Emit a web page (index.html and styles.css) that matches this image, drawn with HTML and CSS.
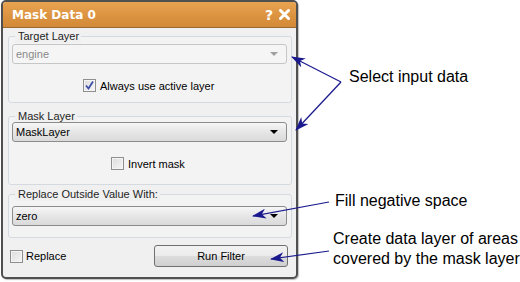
FILE: index.html
```html
<!DOCTYPE html>
<html>
<head>
<meta charset="utf-8">
<link rel="stylesheet" href="styles.css">
</head>
<body>
<div class="stage">
  <div class="window">
    <div class="titlebar">
      <span class="title">Mask Data 0</span>
      <span class="tools"><span class="help">?</span><svg class="close" width="11" height="11" viewBox="0 0 11 11"><path d="M1.5 1.5 L9.5 9.5 M9.5 1.5 L1.5 9.5" stroke="#fff" stroke-width="3" stroke-linecap="round"/></svg></span>
    </div>
    <div class="content">
      <div class="group g1">
        <div class="legend">Target Layer</div>
        <div class="combo disabled"><span>engine</span><i class="arrow"></i></div>
        <div class="checkrow c1">
          <span class="check checked"><svg width="11" height="11" viewBox="0 0 11 11"><path d="M2 5.5 L4.5 8.5 L9 1.5" fill="none" stroke="#3b4fa8" stroke-width="1.8"/></svg></span>
          <span>Always use active layer</span>
        </div>
      </div>
      <div class="group g2">
        <div class="legend">Mask Layer</div>
        <div class="combo"><span>MaskLayer</span><i class="arrow"></i></div>
        <div class="checkrow c2">
          <span class="check"></span>
          <span>Invert mask</span>
        </div>
      </div>
      <div class="group g3">
        <div class="legend">Replace Outside Value With:</div>
        <div class="combo"><span>zero</span><i class="arrow"></i></div>
      </div>
      <div class="bottom">
        <div class="checkrow c3">
          <span class="check"></span>
          <span>Replace</span>
        </div>
        <div class="button">Run Filter</div>
      </div>
    </div>
  </div>

  <svg class="arrows" width="520" height="282" viewBox="0 0 520 282">
    <defs>
      <marker id="ah" markerWidth="14" markerHeight="10" refX="13" refY="5" orient="auto" markerUnits="userSpaceOnUse">
        <path d="M0 0 L14 5 L0 10 L4 5 Z" fill="#1a1a8e"/>
      </marker>
    </defs>
    <g stroke="#1a1a8e" stroke-width="1.2" fill="none">
      <line x1="341" y1="82" x2="292" y2="57" marker-end="url(#ah)"/>
      <line x1="341" y1="82" x2="296" y2="130" marker-end="url(#ah)"/>
      <line x1="329" y1="202" x2="253" y2="216" marker-end="url(#ah)"/>
      <line x1="329" y1="251" x2="271" y2="259" marker-end="url(#ah)"/>
    </g>
  </svg>
  <div class="note n1">Select input data</div>
  <div class="note n2">Fill negative space</div>
  <div class="note n3">Create data layer of areas<br>covered by the mask layer</div>
</div>
</body>
</html>
```

FILE: styles.css
```css
* { box-sizing: border-box; }
html, body { margin: 0; padding: 0; background: #fff; }
.stage {
  position: relative;
  width: 520px;
  height: 282px;
  overflow: hidden;
  font-family: "Liberation Sans", Arial, sans-serif;
  font-size: 11px;
  color: #000;
}
.window {
  margin-left: 1px;
  width: 297px;
  height: 279px;
  border: 2px solid #505050;
  border-radius: 5px;
  background: #f0f0f0;
  display: flex;
  flex-direction: column;
  overflow: hidden;
  box-shadow: 1px 1px 1px rgba(0,0,0,0.25);
}
.titlebar {
  height: 26px;
  flex: none;
  background: linear-gradient(#e8a351, #db923f 60%, #d28a3a);
  border-bottom: 1px solid #9a6a30;
  display: flex;
  align-items: center;
  padding: 0 6px 0 9px;
  color: #fff;
}
.title {
  font-family: "DejaVu Sans", sans-serif;
  font-weight: bold;
  font-size: 12px;
  flex: 1;
}
.tools { display: flex; align-items: center; gap: 6px; }
.help { font-family: "DejaVu Sans", sans-serif; font-weight: bold; font-size: 14px; line-height: 14px; }
.close { display: block; }
.content {
  flex: 1;
  padding: 0 4px 0 5px;
  display: flex;
  flex-direction: column;
}
.group {
  border: 1px solid #d5d9e0;
  border-radius: 3px;
  display: flex;
  flex-direction: column;
  padding: 0 4px 0 3px;
  background: #f3f3f3;
}
.legend {
  align-self: flex-start;
  margin: -7px 0 0 3px;
  padding: 0 2px 0 3px;
  height: 13px;
  line-height: 13px;
  background: #f0f0f0;
  color: #1e1e1e;
}
.g1 { margin-top: 8px; height: 67px; }
.g1 .combo { margin-top: 1px; }
.g2 { margin-top: 13px; height: 69px; }
.g2 .combo { margin-top: -1px; }
.g3 { margin-top: 9px; height: 44px; }
.g3 .combo { margin-top: 5px; }
.combo {
  height: 20px;
  border: 1px solid #8c8c8c;
  border-radius: 3px;
  background: linear-gradient(#f6f6f6, #e6e6e6 50%, #dadada);
  display: flex;
  align-items: center;
  padding: 0 8px 0 3px;
}
.combo span { flex: 1; }
.combo.disabled {
  border-color: #c6c6c6;
  background: #f5f5f5;
  color: #8a8a8a;
}
.arrow {
  width: 0; height: 0;
  border-left: 4px solid transparent;
  border-right: 4px solid transparent;
  border-top: 4px solid #000;
}
.disabled .arrow { border-top-color: #a0a0a0; }
.checkrow {
  display: flex;
  align-items: center;
  gap: 4px;
}
.c1 { margin-top: 15px; margin-left: 71px; }
.c2 { margin-top: 15px; margin-left: 99px; }
.check {
  width: 13px;
  height: 13px;
  border: 1px solid #8e8f8f;
  background: linear-gradient(135deg, #dcdcdc, #f6f6f6);
  box-shadow: inset 0 0 0 1px #f4f4f4;
  display: flex;
  align-items: center;
  justify-content: center;
}
.bottom {
  margin-top: 7px;
  display: flex;
  align-items: center;
  justify-content: space-between;
  padding: 0 4px 0 2px;
}
.c3 { gap: 3px; }
.button {
  width: 134px;
  height: 22px;
  border: 1px solid #707070;
  border-radius: 3px;
  background: linear-gradient(#f2f2f2, #ebebeb 50%, #dddddd 51%, #cfcfcf);
  display: flex;
  align-items: center;
  justify-content: center;
}
.arrows { position: absolute; left: 0; top: 0; pointer-events: none; }
.note {
  position: absolute;
  font-family: "Liberation Sans", Arial, sans-serif;
  font-size: 16px;
  line-height: 20px;
  color: #000;
  white-space: nowrap;
}
.n1 { left: 349px; top: 67px; }
.n2 { left: 335px; top: 191px; }
.n3 { left: 333px; top: 229px; }
```
